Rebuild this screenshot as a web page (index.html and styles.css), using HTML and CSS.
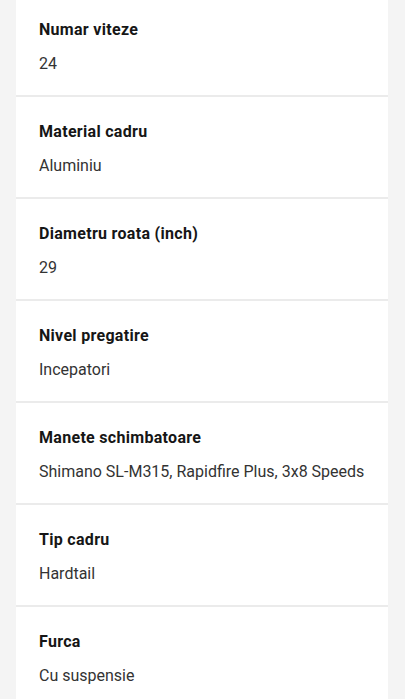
FILE: index.html
```html
<!DOCTYPE html>
<html>
<head>
  <meta charset="UTF-8">
  <title>Specificatii</title>
  <link rel="stylesheet" href="styles.css">
</head>
<body>
  <div class="specs">
    <div class="row"><div class="label">Numar viteze</div><div class="value">24</div></div>
    <div class="row"><div class="label">Material cadru</div><div class="value">Aluminiu</div></div>
    <div class="row"><div class="label">Diametru roata (inch)</div><div class="value">29</div></div>
    <div class="row"><div class="label">Nivel pregatire</div><div class="value">Incepatori</div></div>
    <div class="row"><div class="label">Manete schimbatoare</div><div class="value">Shimano SL-M315, Rapidfire Plus, 3x8 Speeds</div></div>
    <div class="row"><div class="label">Tip cadru</div><div class="value">Hardtail</div></div>
    <div class="row"><div class="label">Furca</div><div class="value">Cu suspensie</div></div>
  </div>
</body>
</html>
```
FILE: styles.css
```css
body {margin:0;background:#f4f4f4;font-family:"Roboto","Noto Sans",sans-serif;overflow:hidden;}
.specs {margin:-5px 17px 0 16px;background:#fff;}
.row {height:100px;box-sizing:content-box;padding:0 23px;border-bottom:2px solid #ebebeb;}
.label {padding-top:23px;font-size:16px;line-height:24px;font-weight:700;color:#161616;letter-spacing:0.3px;}
.value {margin-top:10px;font-size:16px;line-height:24px;color:#333;}
```
